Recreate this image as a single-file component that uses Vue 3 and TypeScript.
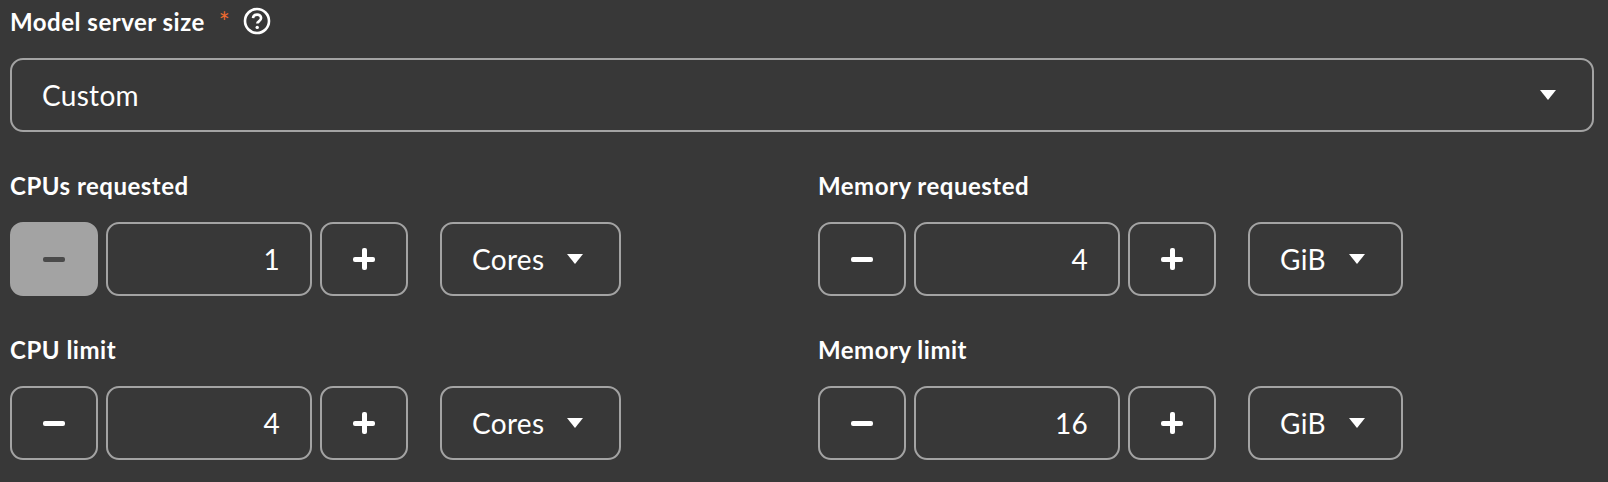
<script setup lang="ts">
type SizeField = {
  label: string;
  value: number;
  unit: string;
  minusDisabled?: boolean;
};

const fields: SizeField[] = [
  { label: "CPUs requested", value: 1, unit: "Cores", minusDisabled: true },
  { label: "Memory requested", value: 4, unit: "GiB" },
  { label: "CPU limit", value: 4, unit: "Cores" },
  { label: "Memory limit", value: 16, unit: "GiB" },
];
</script>

<template>
  <div class="page">
    <div class="size-head">
      <span class="field-label">Model server size</span>
      <span class="required">*</span>
      <svg class="help" viewBox="0 0 28 28" width="28" height="28" aria-hidden="true">
        <circle cx="14" cy="14" r="12" fill="none" stroke="currentColor" stroke-width="2.6" />
        <path
          d="M10 11.2c.3-2.3 2-3.6 4.1-3.6 2.3 0 4 1.4 4 3.4 0 1.7-1 2.5-2.2 3.3-.9.6-1.6 1.1-1.6 2.3"
          fill="none"
          stroke="currentColor"
          stroke-width="2.6"
        />
        <circle cx="14.2" cy="20.4" r="1.7" fill="currentColor" />
      </svg>
    </div>

    <div class="select wide">
      <span>Custom</span>
      <i class="caret" />
    </div>

    <div class="field-grid">
      <div v-for="field in fields" :key="field.label" class="field">
        <div class="field-label">{{ field.label }}</div>
        <div class="controls">
          <button class="step" :class="{ disabled: field.minusDisabled }">
            <i class="minus" />
          </button>
          <div class="number">{{ field.value }}</div>
          <button class="step">
            <i class="plus" />
          </button>
          <div class="select unit" :class="field.unit === 'GiB' ? 'unit-gib' : 'unit-cores'">
            <span>{{ field.unit }}</span>
            <i class="caret" />
          </div>
        </div>
      </div>
    </div>
  </div>
</template>

<style>
html,
body {
  margin: 0;
  background: #383838;
}
</style>

<style scoped>
.page {
  box-sizing: border-box;
  width: 1608px;
  height: 482px;
  padding: 8px 14px 0 10px;
  background: #383838;
  color: #fff;
  font-family: Lato, "Liberation Sans", sans-serif;
  overflow: hidden;
}

.size-head {
  display: flex;
  align-items: center;
  height: 28px;
}

.field-label {
  font-size: 24px;
  font-weight: 700;
  line-height: 28px;
  letter-spacing: 0.5px;
}

.required {
  margin-left: 14px;
  color: #ee6a2f;
  font-size: 26px;
  line-height: 28px;
}

.help {
  margin-left: 13px;
  margin-bottom: 2px;
}

.select {
  box-sizing: border-box;
  display: flex;
  align-items: center;
  height: 74px;
  border: 2px solid #a3a3a3;
  border-radius: 13px;
  font-size: 28px;
  letter-spacing: 0.3px;
}

.wide {
  justify-content: space-between;
  margin-top: 22px;
  padding: 0 36px 0 30px;
}

.field-grid {
  display: grid;
  grid-template-columns: 808px 1fr;
  row-gap: 40px;
  margin-top: 40px;
}

.controls {
  display: flex;
  gap: 8px;
  margin-top: 22px;
}

.step {
  box-sizing: border-box;
  display: flex;
  align-items: center;
  justify-content: center;
  width: 88px;
  height: 74px;
  padding: 0;
  border: 2px solid #a3a3a3;
  border-radius: 13px;
  background: transparent;
  color: #fff;
}

.step.disabled {
  border-color: #a3a3a3;
  background: #a3a3a3;
  color: #4a4a4a;
}

.minus {
  width: 22px;
  height: 5px;
  border-radius: 2px;
  background: currentColor;
}

.plus {
  position: relative;
  width: 22px;
  height: 22px;
}

.plus::before,
.plus::after {
  content: "";
  position: absolute;
  border-radius: 2px;
  background: currentColor;
}

.plus::before {
  left: 0;
  top: 8.5px;
  width: 22px;
  height: 5px;
}

.plus::after {
  left: 8.5px;
  top: 0;
  width: 5px;
  height: 22px;
}

.number {
  box-sizing: border-box;
  display: flex;
  align-items: center;
  justify-content: flex-end;
  width: 206px;
  height: 74px;
  padding-right: 30px;
  border: 2px solid #a3a3a3;
  border-radius: 13px;
  font-size: 28px;
  letter-spacing: 0.3px;
}

.unit {
  margin-left: 24px;
  padding: 0 0 0 30px;
}

.unit-cores {
  width: 181px;
}

.unit-gib {
  width: 155px;
}

.unit .caret {
  margin-left: 23px;
}

.caret {
  width: 0;
  height: 0;
  border-left: 8.5px solid transparent;
  border-right: 8.5px solid transparent;
  border-top: 10px solid #fff;
}
</style>
